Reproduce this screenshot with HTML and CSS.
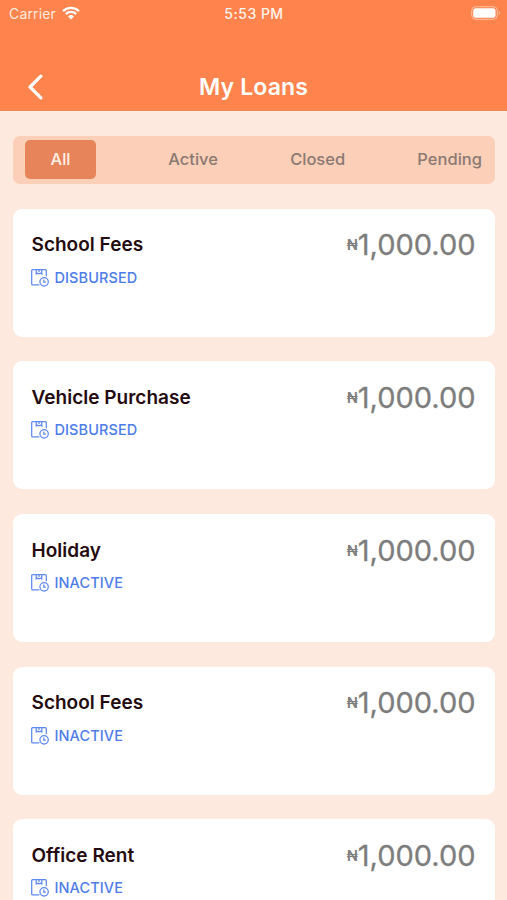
FILE: index.html
```html
<!DOCTYPE html>
<html lang="en">
<head>
<meta charset="utf-8">
<title>My Loans</title>
<link rel="stylesheet" href="styles.css">
</head>
<body>
<svg class="defs" width="0" height="0">
  <symbol id="box" viewBox="0 0 18 18">
    <path d="M8.4 15.9H1.7a1 1 0 0 1-1-1V1.7a1 1 0 0 1 1-1h12.6a1 1 0 0 1 1 1v5.6M5.2.9v4l1.4-.8 1.4.8 1.4-.8 1.4.8v-4M8 .9v2"/>
    <circle cx="13.1" cy="12.8" r="4.2"/>
    <path d="M12.8 10.5v2.6h2.1"/>
  </symbol>
</svg>
<header class="header">
  <div class="status">
    <div class="carrier"><span>Carrier</span>
      <svg class="wifi" viewBox="0 0 18 14"><path d="M1 5.1a11.4 11.4 0 0 1 16 0M3.8 8.1a7.4 7.4 0 0 1 10.4 0"/><path class="dot" d="M9 13.5L6 10.4a4.3 4.3 0 0 1 6 0z"/></svg>
    </div>
    <div class="time">5:53 PM</div>
    <svg class="battery" viewBox="0 0 30 14"><rect class="shell" x=".7" y=".7" width="25.6" height="12.6" rx="4"/><rect class="level" x="2.2" y="2.3" width="22.3" height="9.4" rx="2.5"/><path class="tip" d="M27.8 4.8q2 2.2 0 4.4z"/></svg>
  </div>
  <div class="nav">
    <svg class="back" viewBox="0 0 16 26"><path d="M13.9 2.2L3 13l10.9 10.8"/></svg>
    <h1>My Loans</h1>
  </div>
</header>
<main>
  <nav class="tabs">
    <span class="tab active">All</span><span class="tab">Active</span><span class="tab">Closed</span><span class="tab">Pending</span>
  </nav>
  <section class="card"><div><h2>School Fees</h2><p class="state"><svg><use href="#box"/></svg>DISBURSED</p></div><div class="amount"><small>₦</small>1,000.00</div></section>
  <section class="card"><div><h2>Vehicle Purchase</h2><p class="state"><svg><use href="#box"/></svg>DISBURSED</p></div><div class="amount"><small>₦</small>1,000.00</div></section>
  <section class="card"><div><h2>Holiday</h2><p class="state"><svg><use href="#box"/></svg>INACTIVE</p></div><div class="amount"><small>₦</small>1,000.00</div></section>
  <section class="card"><div><h2>School Fees</h2><p class="state"><svg><use href="#box"/></svg>INACTIVE</p></div><div class="amount"><small>₦</small>1,000.00</div></section>
  <section class="card"><div><h2>Office Rent</h2><p class="state"><svg><use href="#box"/></svg>INACTIVE</p></div><div class="amount"><small>₦</small>1,000.00</div></section>
</main>
</body>
</html>
```
FILE: styles.css
```css
* { box-sizing: border-box; margin: 0; }
body { height: 900px; overflow: hidden; background: #fee9de; font-family: Inter, sans-serif; }
.defs { display: block; height: 0; }
.header { height: 111px; background: #ff834c; color: #fff; border-bottom: 1px solid #f08754; }
.status { height: 27px; padding: 0 8px 0 9px; display: grid; grid-template-columns: 1fr auto 1fr; align-items: center; font-size: 14px; }
.carrier { display: flex; align-items: center; gap: 6px; color: #ffeadf; letter-spacing: .15px; }
.wifi { width: 18px; height: 14px; margin-top: -2px; fill: none; stroke: #fff; stroke-width: 2.3; }
.wifi .dot { fill: #fff; stroke: none; }
.time { font-weight: 500; color: #fff3ec; letter-spacing: .5px; }
.battery { width: 30px; height: 14px; justify-self: end; margin-right: -2px; margin-top: -1px; }
.shell { fill: none; stroke: #ffc3a5; stroke-width: 1; }
.level { fill: #fff; }
.tip { fill: #ffc3a5; }
.nav { height: 83px; padding: 37px 27px 0; display: grid; grid-template-columns: 16px 1fr 16px; align-items: center; text-align: center; }
.back { width: 16px; height: 26px; fill: none; stroke: #fff; stroke-width: 3.2; stroke-linecap: round; stroke-linejoin: round; }
h1 { font-size: 23px; line-height: 28px; font-weight: 600; letter-spacing: .15px; }
main { height: 789px; overflow: hidden; padding: 24.5px 12.5px 0; display: flex; flex-direction: column; gap: 24.7px; }
.tabs { height: 48.5px; flex: none; padding: 0 12.5px; display: flex; align-items: center; justify-content: space-between; border-radius: 7px; background: #fccfb8; font-size: 16.5px; line-height: 20px; font-weight: 500; color: #8b7974; }
.tab { margin-top: -1px; }
.tab.active { width: 71px; height: 39px; margin-top: 0; line-height: 39px; text-align: center; border-radius: 5px; background: #e78459; color: #fff0e8; }
.card { height: 128px; flex: none; padding: 22.6px 19px 0; display: flex; justify-content: space-between; border-radius: 9px; background: #fff; }
h2 { font-size: 19px; line-height: 28px; font-weight: 600; color: #250b10; letter-spacing: .02px; }
.state { display: flex; align-items: center; gap: 6px; margin: 8.3px 0 0 -1px; line-height: 20px; font-size: 14.5px; font-weight: 500; letter-spacing: .1px; color: #4e7dea; }
.state svg { width: 18px; height: 18px; fill: none; stroke: #5f88ef; stroke-width: 1.25; }
.amount { display: flex; align-items: center; height: 27px; font-size: 29px; line-height: 29px; font-weight: 400; color: #7d7d7d; -webkit-text-stroke: .3px #7d7d7d; }
.amount small { font-size: 14.5px; font-weight: 600; -webkit-text-stroke: 0; }
```
